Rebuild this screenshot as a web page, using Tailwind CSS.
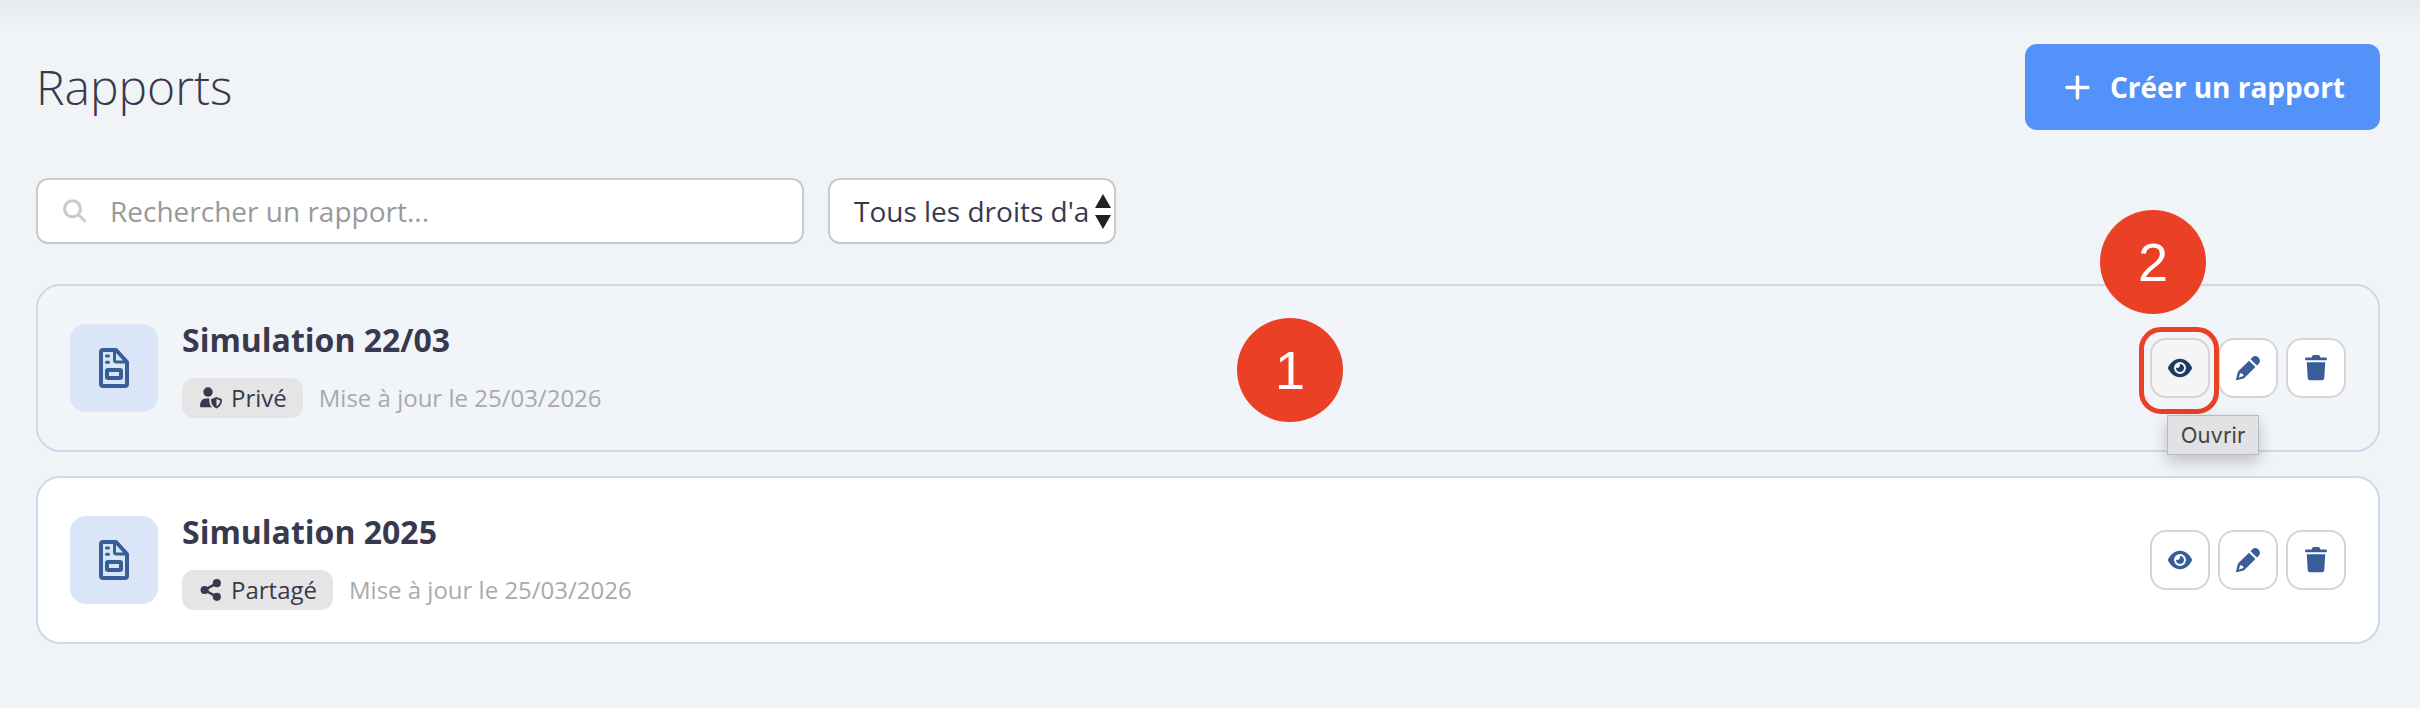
<!doctype html>
<html lang="fr">
<head>
  <meta charset="UTF-8">
  <meta name="viewport" content="width=device-width, initial-scale=1.0">
  <title>Rapports</title>
  <script src="https://cdn.jsdelivr.net/npm/@tailwindcss/browser@4"></script>
</head>
<body class="min-h-screen bg-[#f0f4f7] bg-[linear-gradient(#e6eaed,#ebeff2_16px,#f0f4f7_30px)] bg-no-repeat font-['Open_Sans',sans-serif] text-[#39394d]">

  <!-- Icons -->
  <svg class="hidden">
    <symbol id="icon-report" viewBox="0 0 30 40">
      <g fill="none" stroke="currentColor" stroke-width="4" stroke-linejoin="round" stroke-linecap="round">
        <path d="M4 2h13l11 12v22a2 2 0 0 1-2 2H4a2 2 0 0 1-2-2V4a2 2 0 0 1 2-2z"/>
        <path stroke-width="3" d="M15.500 3v9a2 2 0 0 0 2 2H27"/>
        <rect x="8" y="22" width="14" height="8" rx="1"/>
        <path stroke-width="3" d="M7.500 8h2M7.500 14.300h2"/>
      </g>
    </symbol>
    <symbol id="icon-eye" viewBox="0 0 576 512">
      <path fill="currentColor" d="M288 32c-80.800 0-145.500 36.800-192.600 80.600C48.600 156 17.300 208 2.500 243.700c-3.300 7.900-3.300 16.700 0 24.600C17.300 304 48.600 356 95.400 399.400C142.500 443.200 207.200 480 288 480s145.500-36.800 192.600-80.600c46.800-43.500 78.100-95.400 93-131.100c3.300-7.900 3.300-16.700 0-24.600c-14.900-35.700-46.200-87.700-93-131.100C433.500 68.800 368.800 32 288 32zM144 256a144 144 0 1 1 288 0 144 144 0 1 1 -288 0zm144-64c0 35.300-28.700 64-64 64c-7.100 0-13.900-1.200-20.300-3.300c-5.500-1.800-11.900 1.600-11.700 7.400c.3 6.900 1.300 13.800 3.200 20.700c13.700 51.200 66.400 81.600 117.600 67.900s81.600-66.400 67.900-117.600c-11.100-41.500-47.800-69.400-88.600-71.100c-5.800-.2-9.200 6.100-7.400 11.700c2.100 6.400 3.300 13.200 3.300 20.300z"/>
    </symbol>
    <symbol id="icon-pencil" viewBox="0 0 24 24">
      <path fill="currentColor" fill-rule="evenodd" d="M14.500 3.200l1.900-1.900a4 4 0 0 1 5.700 0l.7.7a4 4 0 0 1 0 5.700l-1.900 1.900zM13 4.700l6.400 6.400L8.900 21.600a3 3 0 0 1-1.300.8L1.200 24.100A.9.900 0 0 1 .1 23l1.600-6.500a3 3 0 0 1 .8-1.400zM4.300 16.700l-1.500 4.700 4.700-1.500-.5-2-2-.4z"/>
    </symbol>
    <symbol id="icon-trash" viewBox="0 0 22 26">
      <path fill="currentColor" d="M7.500.6A1.500 1.500 0 0 1 8.700 0h4.600a1.500 1.500 0 0 1 1.200.6L15.500 2.500h5.200a1.300 1.300 0 0 1 0 2.700H1.300a1.300 1.300 0 0 1 0-2.700h5.200zM1.800 7.200h18.400l-.9 15.900a2.400 2.400 0 0 1-2.400 2.200H5.100a2.400 2.400 0 0 1-2.400-2.200z"/>
    </symbol>
    <symbol id="icon-user-shield" viewBox="0 0 22 22">
      <circle cx="8" cy="5" r="4.700" fill="currentColor"/>
      <path fill="currentColor" d="M6 11.500h3.300v2.500c0 2.500 1 4.800 2.700 6.300H1A1 1 0 0 1 0 19.300C0 15 2 11.500 6 11.500z"/>
      <path fill="currentColor" fill-rule="evenodd" d="M16.500 10l5 1.900a.9.900 0 0 1 .5.800c0 4-1.800 7-5.500 8.700-3.700-1.700-5.500-4.700-5.500-8.700a.9.900 0 0 1 .5-.8zM16.500 12v7.200c2.200-1.300 3.500-3.200 3.700-5.800z"/>
    </symbol>
    <symbol id="icon-share" viewBox="0 0 20 20">
      <g fill="currentColor">
        <circle cx="15.300" cy="3.800" r="3.700"/>
        <circle cx="4.200" cy="10" r="3.700"/>
        <circle cx="15.300" cy="16.200" r="3.700"/>
      </g>
      <path fill="none" stroke="currentColor" stroke-width="2.200" d="M15.300 3.800L4.200 10l11.100 6.200"/>
    </symbol>
  </svg>

  <main class="flex flex-col pt-11 pr-10 pb-16 pl-9">
    <header class="flex items-center justify-between">
      <h1 class="text-[48px] leading-[64px] font-light">Rapports</h1>
      <button type="button" class="flex h-[86px] items-center gap-5 rounded-xl bg-[#5292f9] pr-[35px] pl-10 text-[28px] font-bold text-white">
        <svg class="size-[25px]" viewBox="0 0 25 25" fill="none" stroke="currentColor" stroke-width="3.500" stroke-linecap="round"><path d="M12.500 2v21M2 12.500h21"/></svg>
        Créer un rapport
      </button>
    </header>

    <!-- Filtres -->
    <form class="mt-12 flex gap-6">
      <label class="flex h-[66px] w-[768px] items-center gap-6 rounded-xl border-2 border-[#cacaca] bg-white px-6">
        <svg class="size-6 shrink-0 text-[#cacaca]" viewBox="0 0 24 24" fill="none" stroke="currentColor" stroke-width="3"><circle cx="10.500" cy="9.800" r="8"/><path stroke-linecap="round" d="M16.500 15.800l6 6"/></svg>
        <input type="text" aria-label="Rechercher un rapport" placeholder="Rechercher un rapport..." class="min-w-0 flex-1 text-[28px] outline-none placeholder:text-[#999]">
      </label>
      <div class="relative w-72">
        <select aria-label="Droits d'accès" class="h-[66px] w-full appearance-none rounded-xl border-2 border-[#cacaca] bg-white pr-6 pl-6 text-[28px]">
          <option>Tous les droits d'a</option>
        </select>
        <svg class="pointer-events-none absolute top-4 right-[5px] h-9 w-4" viewBox="0 0 16 36" fill="#231f20"><path d="M8 0l8 14H0zM8 35l8-14H0z"/></svg>
      </div>
    </form>

    <!-- Liste des rapports -->
    <ul class="mt-10 flex flex-col gap-6">
      <li class="relative flex h-[168px] items-center gap-6 rounded-3xl border-2 border-[#cdd9e9] bg-[#f1f4f8] px-8">
        <div class="flex size-[88px] items-center justify-center rounded-2xl bg-[#dae5f7] text-[#375e98]">
          <svg class="h-10 w-[30px]"><use href="#icon-report"/></svg>
        </div>
        <div class="flex flex-1 flex-col gap-[18px] pt-0.5">
          <h2 class="text-[32px] leading-[40px] font-bold">Simulation 22/03</h2>
          <div class="flex items-center gap-4 text-[24px]">
            <span class="flex h-10 items-center gap-[9px] rounded-xl bg-[#e5e5e5] pr-4 pl-[18px]">
              <svg class="size-[22px]"><use href="#icon-user-shield"/></svg>
              Privé
            </span>
            <span class="text-[#aaa]">Mise à jour le 25/03/2026</span>
          </div>
        </div>
        <div class="flex gap-2 text-[#385e97]">
          <div class="relative">
            <button type="button" aria-label="Ouvrir" class="flex size-[60px] items-center justify-center rounded-2xl border-2 border-[#d4d4d4] bg-[#f5f5f5] text-[#203b63]">
              <svg class="size-6"><use href="#icon-eye"/></svg>
            </button>
            <div class="absolute -top-[11px] -left-[11px] z-10 h-[87px] w-20 rounded-[22px] border-5 border-[#ea4025]"></div>
            <div role="tooltip" class="absolute top-[77px] left-[17px] z-10 flex h-10 w-[92px] items-center justify-center border border-[#b9babc] bg-[#e2e2e4] font-['Inter',sans-serif] text-[22px] text-[#454547] shadow-[0_6px_16px_rgba(0,0,0,0.22)]">Ouvrir</div>
          </div>
          <button type="button" aria-label="Modifier" class="flex size-[60px] items-center justify-center rounded-2xl border-2 border-[#d4d4d4] bg-white">
            <svg class="size-6"><use href="#icon-pencil"/></svg>
          </button>
          <button type="button" aria-label="Supprimer" class="flex size-[60px] items-center justify-center rounded-2xl border-2 border-[#d4d4d4] bg-white">
            <svg class="h-[26px] w-[22px]"><use href="#icon-trash"/></svg>
          </button>
        </div>
        <!-- Repères -->
        <span class="absolute top-8 left-[1199px] flex h-[104px] w-[106px] items-center justify-center rounded-[50%] bg-[#ea4025] font-['Liberation_Sans',sans-serif] text-[54px] text-white">1</span>
        <span class="absolute -top-19 right-[172px] flex h-[104px] w-[106px] items-center justify-center rounded-[50%] bg-[#ea4025] font-['Liberation_Sans',sans-serif] text-[54px] text-white">2</span>
      </li>

      <li class="flex h-[168px] items-center gap-6 rounded-3xl border-2 border-[#cdd9e9] bg-white px-8">
        <div class="flex size-[88px] items-center justify-center rounded-2xl bg-[#dae5f7] text-[#375e98]">
          <svg class="h-10 w-[30px]"><use href="#icon-report"/></svg>
        </div>
        <div class="flex flex-1 flex-col gap-[18px] pt-0.5">
          <h2 class="text-[32px] leading-[40px] font-bold">Simulation 2025</h2>
          <div class="flex items-center gap-4 text-[24px]">
            <span class="flex h-10 items-center gap-[9px] rounded-xl bg-[#e5e5e5] pr-4 pl-[18px]">
              <svg class="size-[22px]"><use href="#icon-share"/></svg>
              Partagé
            </span>
            <span class="text-[#aaa]">Mise à jour le 25/03/2026</span>
          </div>
        </div>
        <div class="flex gap-2 text-[#385e97]">
          <button type="button" aria-label="Ouvrir" class="flex size-[60px] items-center justify-center rounded-2xl border-2 border-[#d4d4d4] bg-white">
            <svg class="size-6"><use href="#icon-eye"/></svg>
          </button>
          <button type="button" aria-label="Modifier" class="flex size-[60px] items-center justify-center rounded-2xl border-2 border-[#d4d4d4] bg-white">
            <svg class="size-6"><use href="#icon-pencil"/></svg>
          </button>
          <button type="button" aria-label="Supprimer" class="flex size-[60px] items-center justify-center rounded-2xl border-2 border-[#d4d4d4] bg-white">
            <svg class="h-[26px] w-[22px]"><use href="#icon-trash"/></svg>
          </button>
        </div>
      </li>
    </ul>
  </main>
</body>
</html>
